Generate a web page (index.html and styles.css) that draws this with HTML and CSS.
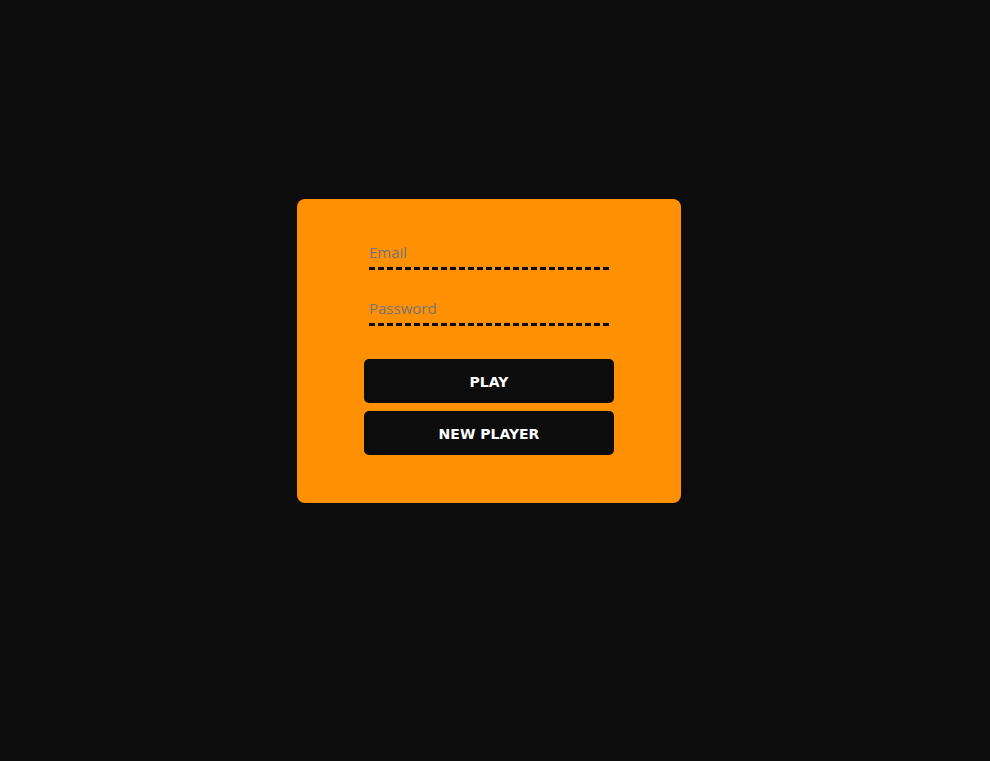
FILE: index.html
```html
<!DOCTYPE html>
<html lang="en">
<head>
<meta charset="utf-8">
<meta name="viewport" content="width=device-width, initial-scale=1">
<title>Play</title>
<link rel="stylesheet" href="styles.css">
</head>
<body>
<main class="page">
  <form class="card">
    <div class="fields">
      <input class="field" type="email" placeholder="Email" aria-label="Email">
      <input class="field" type="password" placeholder="Password" aria-label="Password">
    </div>
    <div class="actions">
      <button class="button" type="submit">PLAY</button>
      <button class="button" type="button">NEW PLAYER</button>
    </div>
  </form>
</main>
</body>
</html>
```
FILE: styles.css
```css
* {
  box-sizing: border-box;
}

body {
  margin: 0;
  background: #0c0c0c;
  font-family: "Open Sans", "Noto Sans", sans-serif;
}

.page {
  display: flex;
  align-items: center;
  justify-content: center;
  min-height: 100vh;
  padding: 0 12px 59px 0;
}

.card {
  display: flex;
  flex-direction: column;
  align-items: center;
  gap: 33px;
  width: 100%;
  max-width: 384px;
  padding: 39px 64px 48px;
  border-radius: 8px;
  background: #ff9004;
}

.fields {
  display: flex;
  flex-direction: column;
  gap: 24px;
  width: 240px;
}

.field {
  width: 100%;
  height: 32px;
  padding: 0 0 2px;
  border: 0;
  border-bottom: 3px dashed #0c0c0c;
  border-radius: 0;
  outline: 0;
  background: transparent;
  color: #0c0c0c;
  font: 400 15px "Open Sans", "Noto Sans", sans-serif;
}

.field::placeholder {
  color: #757575;
  opacity: 1;
}

.actions {
  display: flex;
  flex-direction: column;
  gap: 8px;
  width: 250px;
}

.button {
  height: 44px;
  padding: 2px 0 0;
  border: 0;
  border-radius: 5px;
  background: #0c0c0c;
  color: #fff;
  font: bold 14px "DejaVu Sans", sans-serif;
  cursor: pointer;
}
```
